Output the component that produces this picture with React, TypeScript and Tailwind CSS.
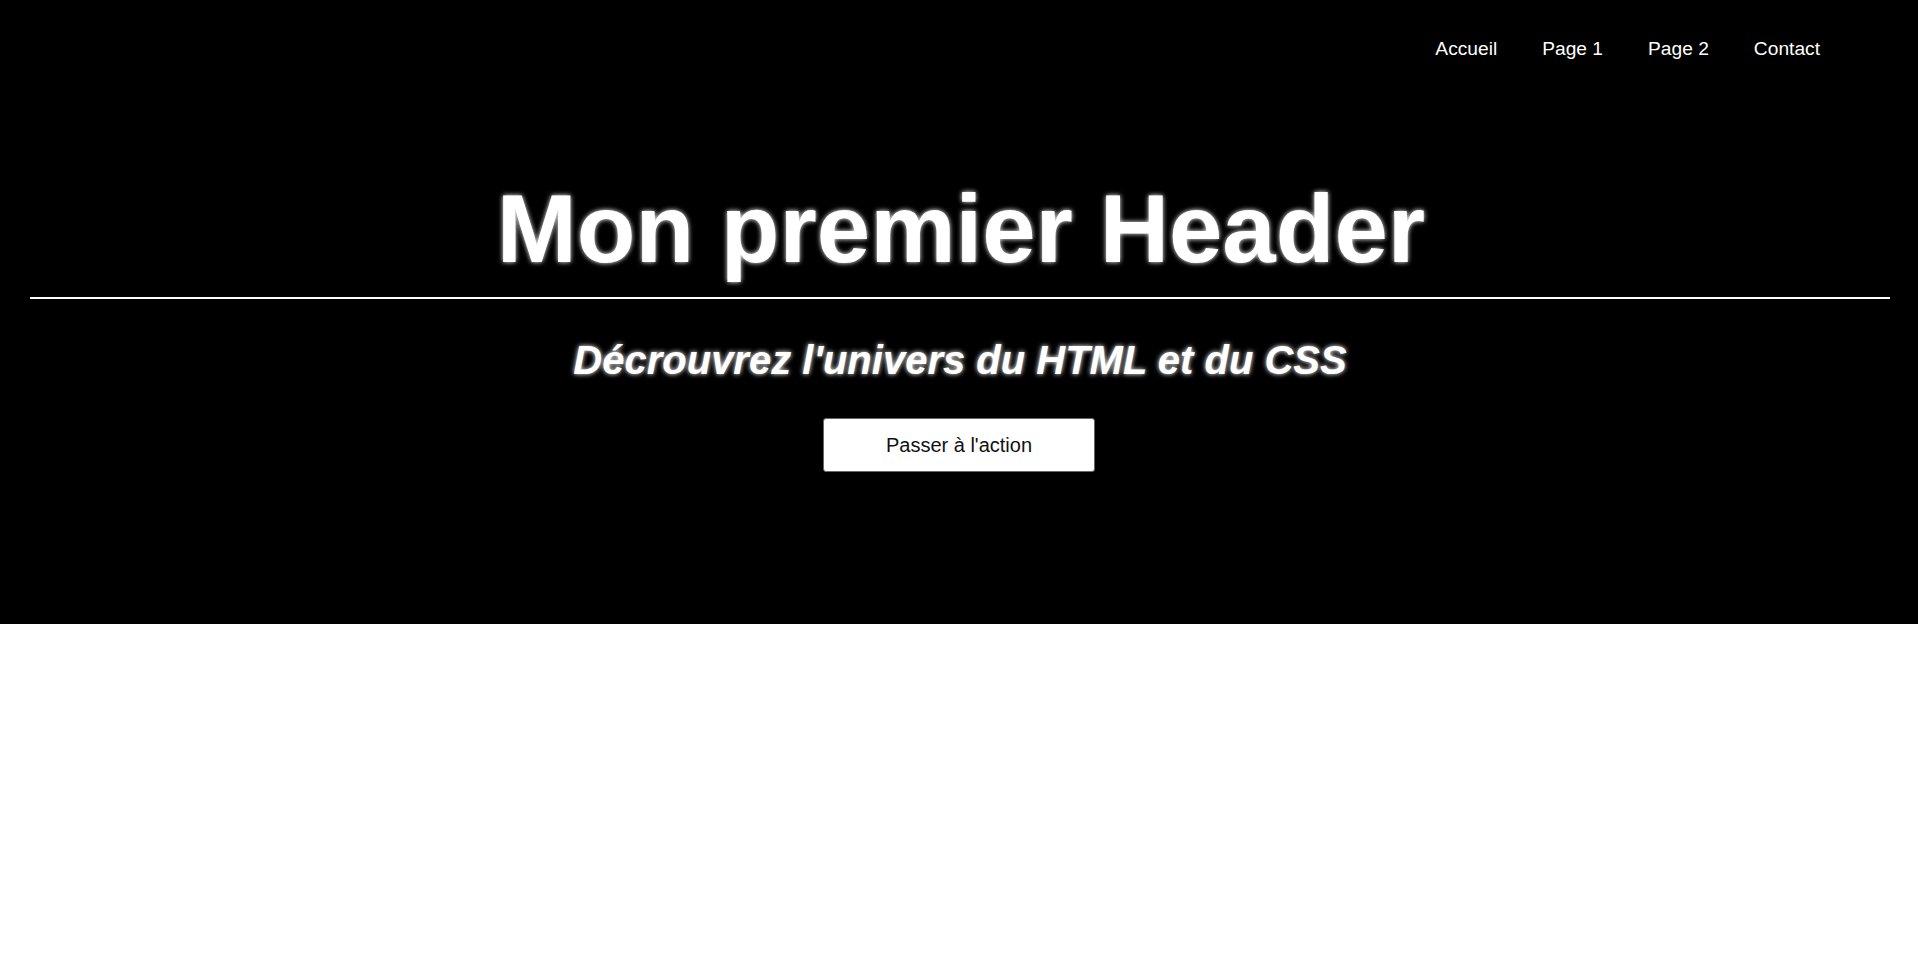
import React from 'react';

const links = ['Accueil', 'Page 1', 'Page 2', 'Contact'];

const App: React.FC = () => {
  return (
    <div className="min-h-screen bg-white font-['Liberation_Sans',Arial,sans-serif]">
      <header className="h-[624px] bg-black text-white flex flex-col">
        <nav className="flex justify-end gap-[45px] pt-[38px] pr-[98px]">
          {links.map((l) => (
            <a key={l} href="#" className="text-[19.2px] leading-[22px] text-white">
              {l}
            </a>
          ))}
        </nav>

        <h1 className="mt-[114px] pl-[4px] text-center text-[96px] leading-[110px] font-bold [text-shadow:0_0_5px_#fff]">
          Mon premier Header
        </h1>

        <div className="mt-[13px] ml-[30px] mr-[28px] h-[2px] bg-white" />

        <h2 className="mt-[38px] pl-[2px] text-center text-[40px] leading-[46px] font-bold italic [text-shadow:0_0_5px_#fff]">
          Décrouvrez l'univers du HTML et du CSS
        </h2>

        <div className="mt-[35px] flex justify-center">
          <button className="w-[272px] h-[54px] bg-white text-[#111] text-[20px] border border-[#666] rounded-[3px]">
            Passer à l'action
          </button>
        </div>
      </header>
    </div>
  );
};

export default App;
